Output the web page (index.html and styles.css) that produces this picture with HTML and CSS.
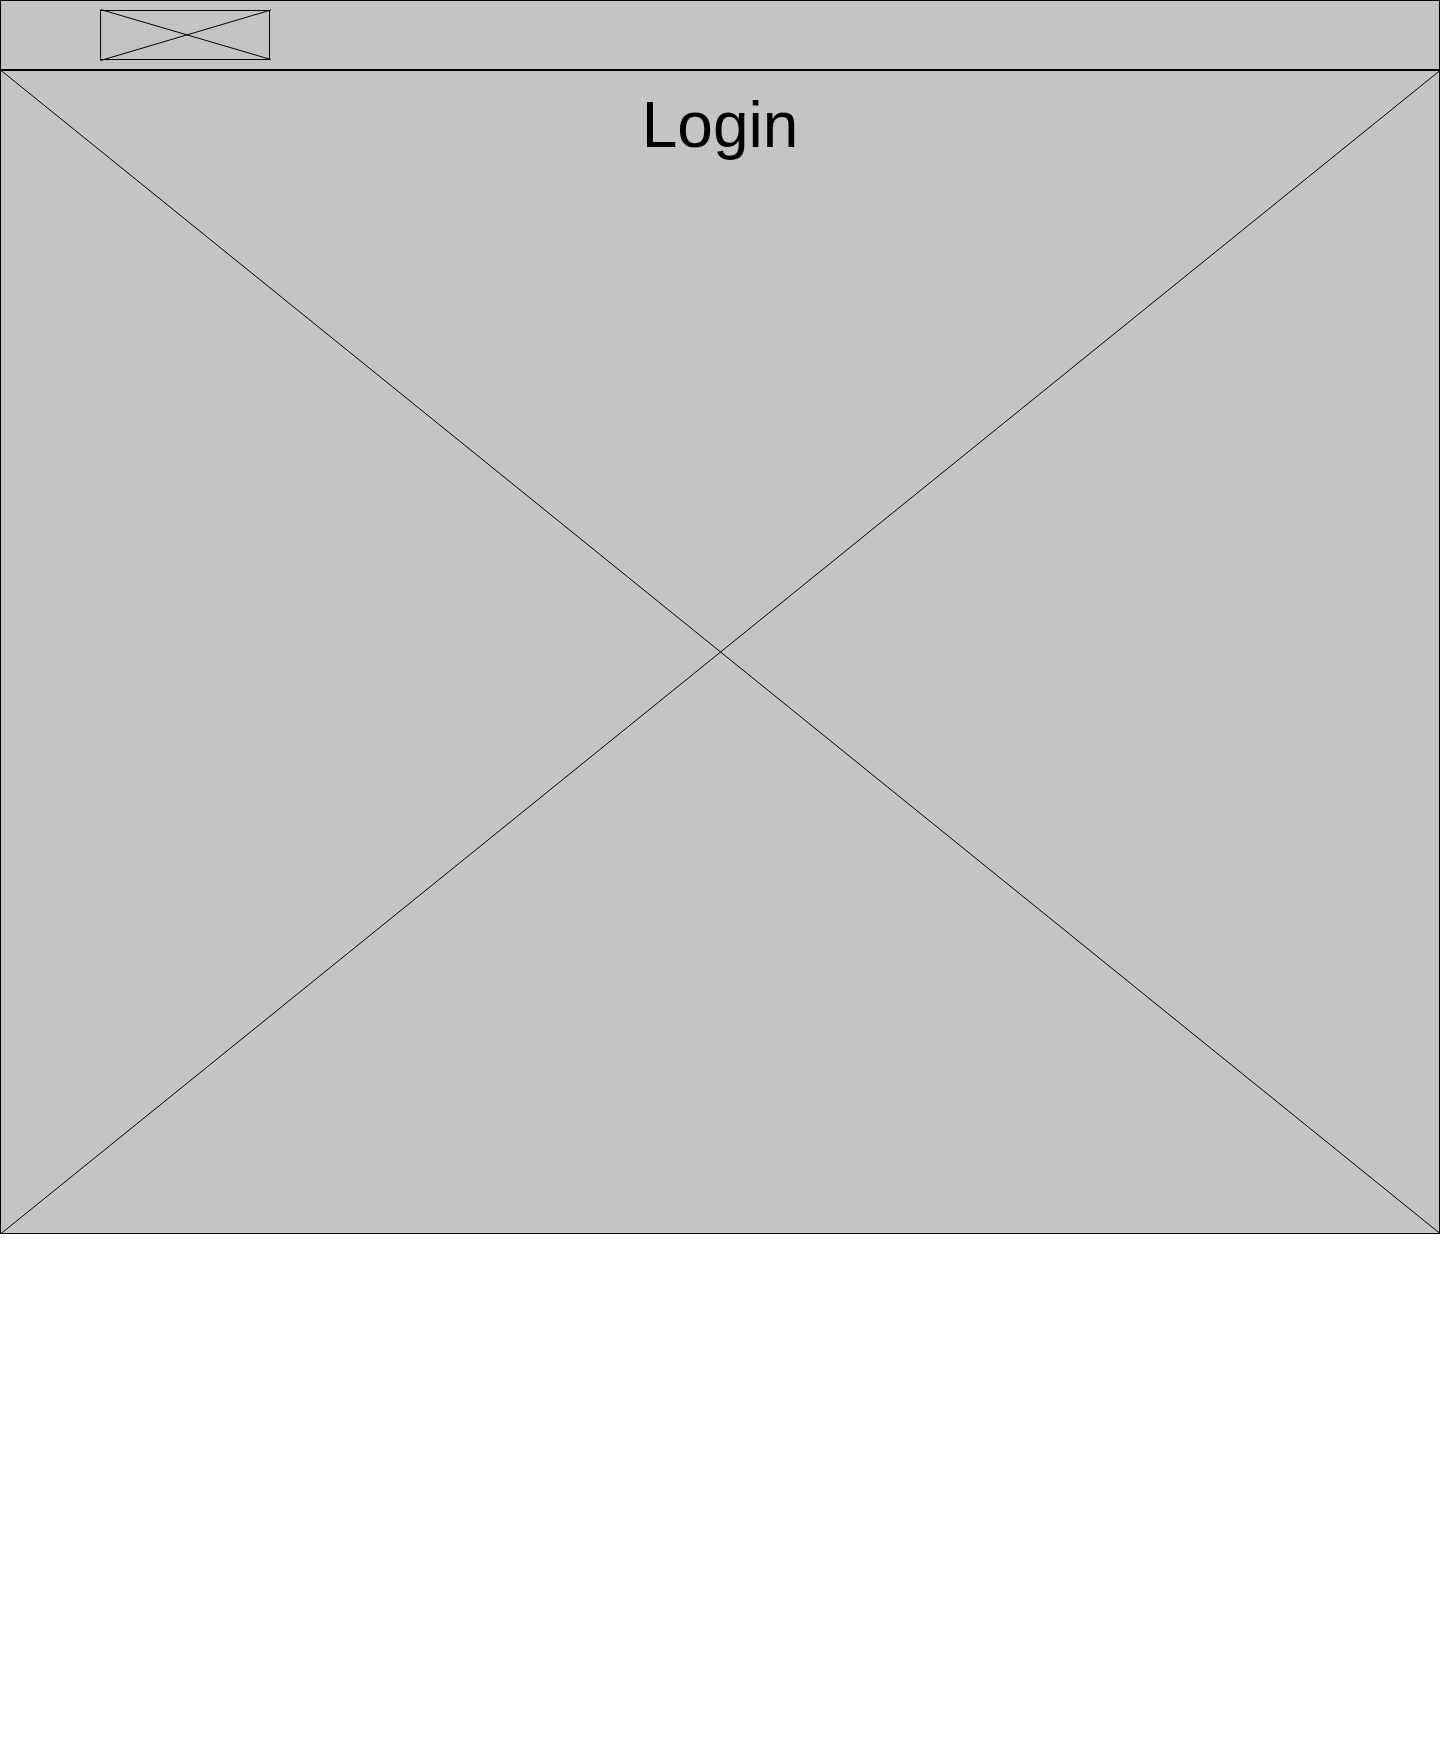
FILE: index.html
```html
<!DOCTYPE html>
<html lang="en">
<head>
<meta charset="utf-8">
<meta name="viewport" content="width=device-width, initial-scale=1">
<title>Login</title>
<link rel="stylesheet" href="styles.css">
</head>
<body>
<header class="header">
  <svg class="logo" viewBox="0 0 170 50" role="img" aria-label="Logo">
    <rect x="0.5" y="0.5" width="169" height="49"/>
    <path d="M0.5 -0.5L171 49.5M0.5 50.5L171 0"/>
  </svg>
</header>
<main class="hero">
  <svg class="cross" viewBox="0 0 1440 1164" preserveAspectRatio="none" aria-hidden="true">
    <path d="M0.5 0L1440 1163.5M0.5 1164L1440 0.5"/>
  </svg>
  <h1 class="title">Login</h1>
</main>
</body>
</html>
```
FILE: styles.css
```css
* {
  box-sizing: border-box;
}

body {
  margin: 0;
  background: #fff;
  color: #000;
  font-family: "Liberation Sans", Arial, sans-serif;
}

.header {
  display: flex;
  align-items: center;
  padding: 9px 99px;
  background: #c4c4c4;
  border: 1px solid #000;
}

.logo {
  width: 170px;
  height: 50px;
  overflow: visible;
  fill: none;
  stroke: #000;
}

.hero {
  display: grid;
  align-content: start;
  position: relative;
  aspect-ratio: 240 / 194;
  padding: 18px;
  background: #c4c4c4;
  border: 1px solid #000;
}

.cross {
  position: absolute;
  top: -1px;
  left: -1px;
  width: calc(100% + 2px);
  height: calc(100% + 2px);
  fill: none;
  stroke: #000;
}

.title {
  position: relative;
  margin: 0;
  font-size: 64px;
  font-weight: 400;
  line-height: 72px;
  text-align: center;
}
```
